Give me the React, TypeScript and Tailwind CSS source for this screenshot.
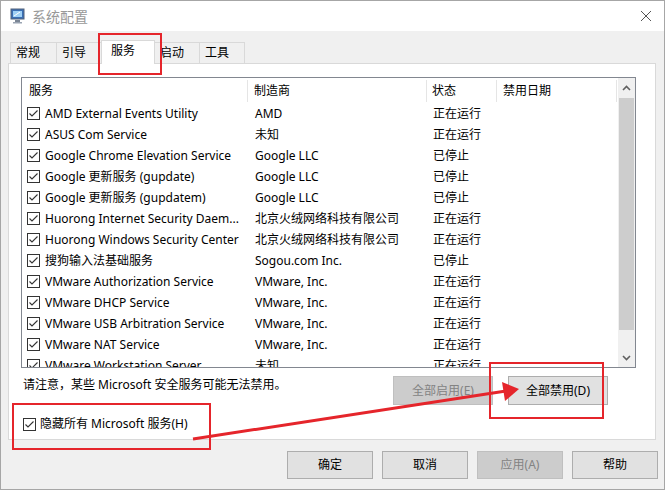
import React from "react";

const rows: [string, string, string][] = [
  ["AMD External Events Utility", "AMD", "正在运行"],
  ["ASUS Com Service", "未知", "正在运行"],
  ["Google Chrome Elevation Service", "Google LLC", "已停止"],
  ["Google 更新服务 (gupdate)", "Google LLC", "已停止"],
  ["Google 更新服务 (gupdatem)", "Google LLC", "已停止"],
  ["Huorong Internet Security Daem...", "北京火绒网络科技有限公司", "正在运行"],
  ["Huorong Windows Security Center", "北京火绒网络科技有限公司", "正在运行"],
  ["搜狗输入法基础服务", "Sogou.com Inc.", "已停止"],
  ["VMware Authorization Service", "VMware, Inc.", "正在运行"],
  ["VMware DHCP Service", "VMware, Inc.", "正在运行"],
  ["VMware USB Arbitration Service", "VMware, Inc.", "正在运行"],
  ["VMware NAT Service", "VMware, Inc.", "正在运行"],
  ["VMware Workstation Server", "未知", "正在运行"],
];

function Check() {
  return (
    <svg width="13" height="13" viewBox="0 0 13 13" className="shrink-0">
      <rect x="0.5" y="0.5" width="12" height="12" fill="#fff" stroke="#333" />
      <polyline points="2.5,6.5 5,9 10.5,3.5" fill="none" stroke="#333" strokeWidth="1.1" />
    </svg>
  );
}

function Btn({ label, disabled, className = "" }: { label: string; disabled?: boolean; className?: string }) {
  return (
    <div
      className={`flex items-center justify-center border text-[12px] ${
        disabled ? "bg-[#cccccc] border-[#bfbfbf] text-[#838383]" : "bg-[#e1e1e1] border-[#adadad] text-black"
      } ${className}`}
    >
      {label}
    </div>
  );
}

export default function App() {
  return (
    <div className="relative w-[665px] h-[490px] overflow-hidden bg-[#f0f0f0] border border-[#a6a6a6] font-['Noto_Sans','Noto_Sans_CJK_SC',sans-serif] text-[12px] text-black">
      {/* title bar */}
      <div className="h-[30px] bg-white flex items-center pl-[9px] pr-[9px]">
        <svg width="16" height="16" viewBox="0 0 16 16">
          <rect x="1" y="1" width="13" height="10" fill="#3a6fb5" stroke="#52627a" />
          <rect x="3" y="3" width="9" height="6" fill="#9fd0f5" />
          <path d="M4 8 L10 4" stroke="#ffffff" strokeWidth="1" />
          <rect x="5" y="12" width="5" height="2" fill="#7a8594" />
          <rect x="3" y="14" width="9" height="1.5" fill="#9aa4b2" />
        </svg>
        <span className="ml-[6px] text-[14px] text-[#999999]">系统配置</span>
        <svg width="12" height="12" viewBox="0 0 12 12" className="ml-auto mr-[3px]">
          <path d="M1 1 L11 11 M11 1 L1 11" stroke="#555" strokeWidth="1" />
        </svg>
      </div>

      {/* tabs */}
      <div className="flex items-end h-[32px] pl-[9px]">
        {[
          ["常规", "w-[47px]"],
          ["引导", "w-[46px]"],
        ].map(([t, w]) => (
          <div key={t} className={`${w} h-[21px] border border-b-0 border-[#d9d9d9] -mr-px bg-[#f0f0f0] flex items-center pl-[5px]`}>
            {t}
          </div>
        ))}
        <div className="relative z-10 w-[54px] h-[24px] -mb-px border border-b-0 border-[#d9d9d9] bg-white pl-[9px] pt-[1px]">
          服务
        </div>
        {[
          ["启动", "w-[46px]"],
          ["工具", "w-[46px]"],
        ].map(([t, w]) => (
          <div key={t} className={`${w} h-[21px] border border-b-0 border-[#d9d9d9] -ml-px bg-[#f0f0f0] flex items-center pl-[5px]`}>
            {t}
          </div>
        ))}
      </div>

      {/* pane */}
      <div className="ml-[7px] w-[648px] h-[377px] bg-white border border-[#d9d9d9] pl-[12px] pt-[13px]">
        <div className="w-[615px] h-[291px] border border-[#828790] flex">
          <div className="flex-1 overflow-hidden">
            <div className="flex h-[25px] items-center">
              <div className="w-[226px] h-[22px] pl-[7px] flex items-center border-r border-[#e5e5e5]">服务</div>
              <div className="w-[179px] h-[22px] pl-[6px] flex items-center border-r border-[#e5e5e5]">制造商</div>
              <div className="w-[70px] h-[22px] pl-[5px] flex items-center border-r border-[#e5e5e5]">状态</div>
              <div className="w-[120px] h-[22px] pl-[6px] flex items-center border-r border-[#e5e5e5]">禁用日期</div>
            </div>
            {rows.map(([name, maker, state]) => (
              <div key={name} className="flex h-[21px] items-center whitespace-nowrap">
                <div className="w-[226px] pl-[5px] flex items-center gap-[5px] overflow-hidden">
                  <Check />
                  <span>{name}</span>
                </div>
                <div className="w-[179px] pl-[7px]">{maker}</div>
                <div className="w-[70px] pl-[6px]">{state}</div>
                <div className="w-[120px]" />
              </div>
            ))}
          </div>
          <div className="w-[17px] bg-[#f0f0f0] flex flex-col">
            <div className="h-[19px] flex items-center justify-center">
              <svg width="9" height="6" viewBox="0 0 9 6">
                <polyline points="1,5 4.5,1.5 8,5" fill="none" stroke="#606060" strokeWidth="1.6" />
              </svg>
            </div>
            <div className="mx-px mt-[1px] h-[232px] bg-[#cdcdcd]" />
            <div className="flex-1" />
            <div className="h-[19px] flex items-center justify-center">
              <svg width="9" height="6" viewBox="0 0 9 6">
                <polyline points="1,1 4.5,4.5 8,1" fill="none" stroke="#606060" strokeWidth="1.6" />
              </svg>
            </div>
          </div>
        </div>

        <div className="flex items-start mt-[8px]">
          <div className="pl-[2px] pt-[1px] leading-[16px]">请注意，某些 Microsoft 安全服务可能无法禁用。</div>
          <div className="ml-auto mr-[47px] flex gap-[15px]">
            <Btn label="全部启用(E)" disabled className="w-[100px] h-[29px]" />
            <Btn label="全部禁用(D)" className="w-[100px] h-[29px]" />
          </div>
        </div>

        <div className="flex items-center gap-[4px] mt-[10px] pl-[2px]">
          <Check />
          <span>隐藏所有 Microsoft 服务(H)</span>
        </div>
      </div>

      {/* bottom buttons */}
      <div className="flex justify-end gap-[9px] pr-[6px] mt-[11px]">
        <Btn label="确定" className="w-[86px] h-[28px]" />
        <Btn label="取消" className="w-[86px] h-[28px]" />
        <Btn label="应用(A)" disabled className="w-[86px] h-[28px]" />
        <Btn label="帮助" className="w-[86px] h-[28px]" />
      </div>

      {/* red annotations */}
      <div className="absolute left-[97px] top-[32px] w-[64px] h-[42px] border-2 border-[#e5252b]" />
      <div className="absolute left-[11px] top-[402px] w-[199px] h-[47px] border-2 border-[#e5252b]" />
      <div className="absolute left-[488px] top-[361px] w-[115px] h-[57px] border-2 border-[#e5252b]" />
      <svg className="absolute left-0 top-0 pointer-events-none" width="665" height="490" viewBox="0 0 665 490">
        <line x1="192" y1="438" x2="505" y2="390" stroke="#e5252b" strokeWidth="3" />
        <polygon points="518,388 501,381 504,400" fill="#e5252b" />
      </svg>
    </div>
  );
}
